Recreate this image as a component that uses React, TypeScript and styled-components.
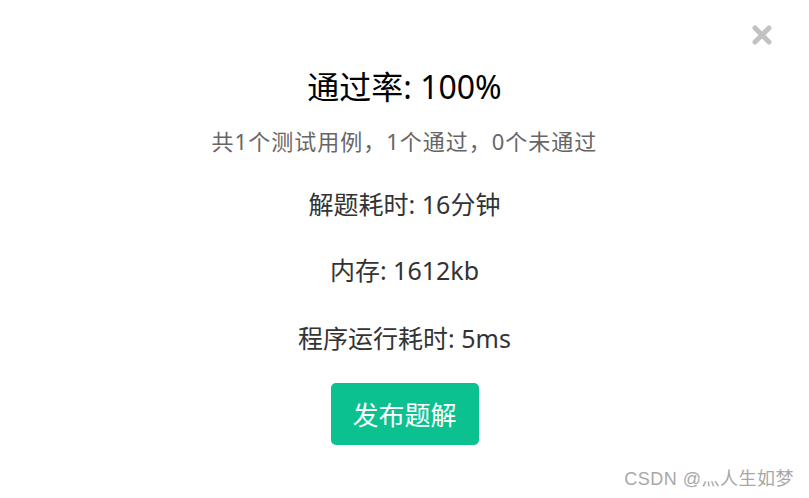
import React from "react";
import styled, { createGlobalStyle } from "styled-components";

const Global = createGlobalStyle`
  html, body { margin: 0; padding: 0; background: #fff; }
  body { font-family: "Noto Sans", "Noto Sans CJK SC", sans-serif; }
`;

const Dialog = styled.div`
  position: relative;
  width: 809px;
  height: 498px;
  background: #fff;
  display: flex;
  flex-direction: column;
  align-items: center;
  padding-top: 65px;
  box-sizing: border-box;
`;

const Close = styled.button`
  position: absolute;
  top: 23px;
  right: 35px;
  width: 24px;
  height: 24px;
  padding: 0;
  border: 0;
  background: transparent;
  cursor: pointer;
  display: flex;
  align-items: center;
  justify-content: center;
`;

const Title = styled.h2`
  margin: 0;
  font-size: 32px;
  line-height: 44px;
  font-weight: 400;
  color: #000;
`;

const Summary = styled.p`
  margin: 18px 0 0;
  font-size: 22px;
  letter-spacing: 1px;
  line-height: 28px;
  color: #666;
`;

const Stat = styled.p<{ $gap: number }>`
  margin: ${(p) => p.$gap}px 0 0;
  font-size: 25px;
  line-height: 34px;
  color: #333;
`;

const Publish = styled.button`
  margin-top: 28px;
  width: 148px;
  height: 62px;
  border: 0;
  border-radius: 5px;
  background: #0bc18f;
  color: #fff;
  font-family: inherit;
  font-size: 26px;
  cursor: pointer;
`;

const Watermark = styled.div`
  position: absolute;
  right: 15px;
  bottom: 8px;
  font-family: "Liberation Sans", "Noto Sans CJK SC", sans-serif;
  font-size: 18px;
  letter-spacing: 0.5px;
  color: #a8a8a8;
`;

export default function App() {
  return (
    <>
      <Global />
      <Dialog>
        <Close aria-label="close">
          <svg width="22" height="22" viewBox="0 0 22 22">
            <path d="M4 4 L18 18 M18 4 L4 18" stroke="#c2c2c2" strokeWidth="5" strokeLinecap="round" />
          </svg>
        </Close>
        <Title>通过率: 100%</Title>
        <Summary>共1个测试用例，1个通过，0个未通过</Summary>
        <Stat $gap={32}>解题耗时: 16分钟</Stat>
        <Stat $gap={32}>内存: 1612kb</Stat>
        <Stat $gap={34}>程序运行耗时: 5ms</Stat>
        <Publish>发布题解</Publish>
        <Watermark>CSDN @灬人生如梦</Watermark>
      </Dialog>
    </>
  );
}
